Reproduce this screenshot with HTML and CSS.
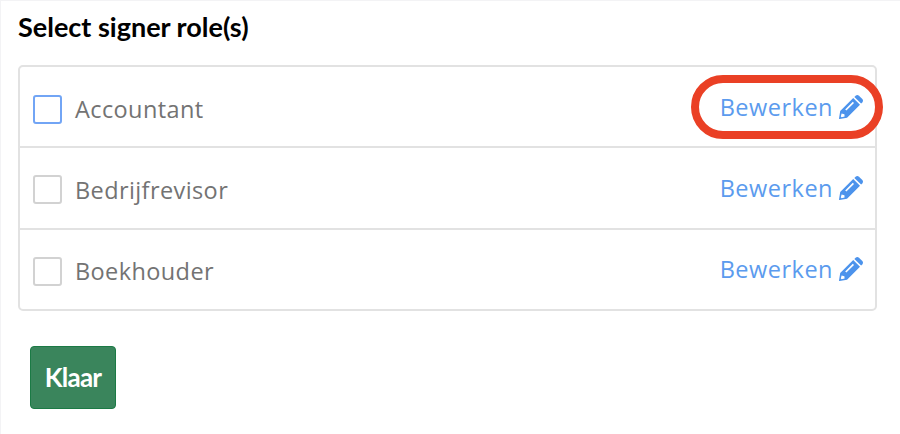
FILE: index.html
```html
<!DOCTYPE html>
<html lang="nl">
<head>
  <meta charset="UTF-8" />
  <meta name="viewport" content="width=device-width, initial-scale=1.0"/>
  <title>Select signer role(s)</title>
  <link rel="stylesheet" href="styles.css">
</head>
<body>
  <!-- Pencil icon, used in every row -->
  <svg class="sprite" width="0" height="0">
    <symbol id="pencil" viewBox="0 0 24 24">
      <path fill-rule="evenodd" d="M.6 24 Q0 24 0 23.4 L1.2 16 L14.2 3 L21 9.8 L8 22.8 Z M2.6 18.6 L1.8 21.4 L2.6 22.2 L5.6 21.4 L5.4 19.2 Z M6.2 14.4 L7.4 15.6 L15 8 L13.8 6.8 Z"/>
      <path d="M15.4 1.9 L16.6 .7 Q18.3 -.7 20 .7 L23.3 4 Q24.7 5.7 23.3 7.4 L22.1 8.6 Z"/>
    </symbol>
  </svg>

  <h1>Select signer role(s)</h1>

  <div class="roles">
    <div class="role">
      <label><input type="checkbox" class="active">Accountant</label>
      <a class="edit">Bewerken <svg class="icon"><use href="#pencil"/></svg><span class="marker"></span></a>
    </div>
    <div class="role">
      <label><input type="checkbox">Bedrijfrevisor</label>
      <a class="edit">Bewerken <svg class="icon"><use href="#pencil"/></svg></a>
    </div>
    <div class="role">
      <label><input type="checkbox">Boekhouder</label>
      <a class="edit">Bewerken <svg class="icon"><use href="#pencil"/></svg></a>
    </div>
  </div>

  <button class="done">Klaar</button>
</body>
</html>
```
FILE: styles.css
```css
* {
  box-sizing: border-box;
}

body {
  margin: 0;
  height: 434px;
  padding: 10px 23px 0 17px;
  border-top: 1px solid #f3f3f5;
  border-left: 1px solid #f3f3f5;
  background: #fff;
  font-family: "Open Sans", sans-serif;
  overflow: hidden;
}

.sprite {
  position: absolute;
}

h1 {
  margin: 0;
  font-family: Lato, sans-serif;
  font-size: 27px;
  font-weight: bold;
  line-height: 31px;
  color: #000;
}

.roles {
  margin-top: 23px;
  border: 2px solid #e2e2e2;
  border-radius: 5px;
}

.role {
  display: flex;
  justify-content: space-between;
  align-items: center;
  height: 79px;
  padding: 5px 12px 0 13px;
}

.role + .role {
  height: 82px;
  padding-top: 3px;
  border-top: 2px solid #e2e2e2;
}

.role:last-child {
  height: 81px;
}

.role label {
  display: flex;
  align-items: center;
  font-size: 23.5px;
  letter-spacing: 0.4px;
  line-height: 30px;
  color: #737373;
}

input[type="checkbox"] {
  appearance: none;
  width: 29px;
  height: 29px;
  margin: 0 13px 0 0;
  border: 2px solid #d2d2d2;
  border-radius: 3px;
  background: #fff;
}

input.active {
  border-color: #72a5f5;
}

.edit {
  position: relative;
  display: flex;
  align-items: center;
  gap: 6px;
  margin-bottom: 4px;
  font-size: 23.5px;
  letter-spacing: 0.5px;
  line-height: 30px;
  color: #5b9bee;
}

.icon {
  width: 24px;
  height: 24px;
  fill: #4c93ec;
}

/* red ring around the first edit link */
.marker {
  position: absolute;
  top: -17px;
  right: -20px;
  width: 192px;
  height: 64px;
  border: 8px solid #ea4025;
  border-radius: 32px;
}

.done {
  display: block;
  width: 86px;
  height: 63px;
  margin: 35px 0 0 12px;
  padding: 0 0 2px;
  border: 1px solid #1b7a45;
  border-radius: 4px;
  background: #3a855c;
  font-family: Lato, sans-serif;
  font-size: 26px;
  font-weight: bold;
  letter-spacing: -0.8px;
  color: #fff;
}
```
